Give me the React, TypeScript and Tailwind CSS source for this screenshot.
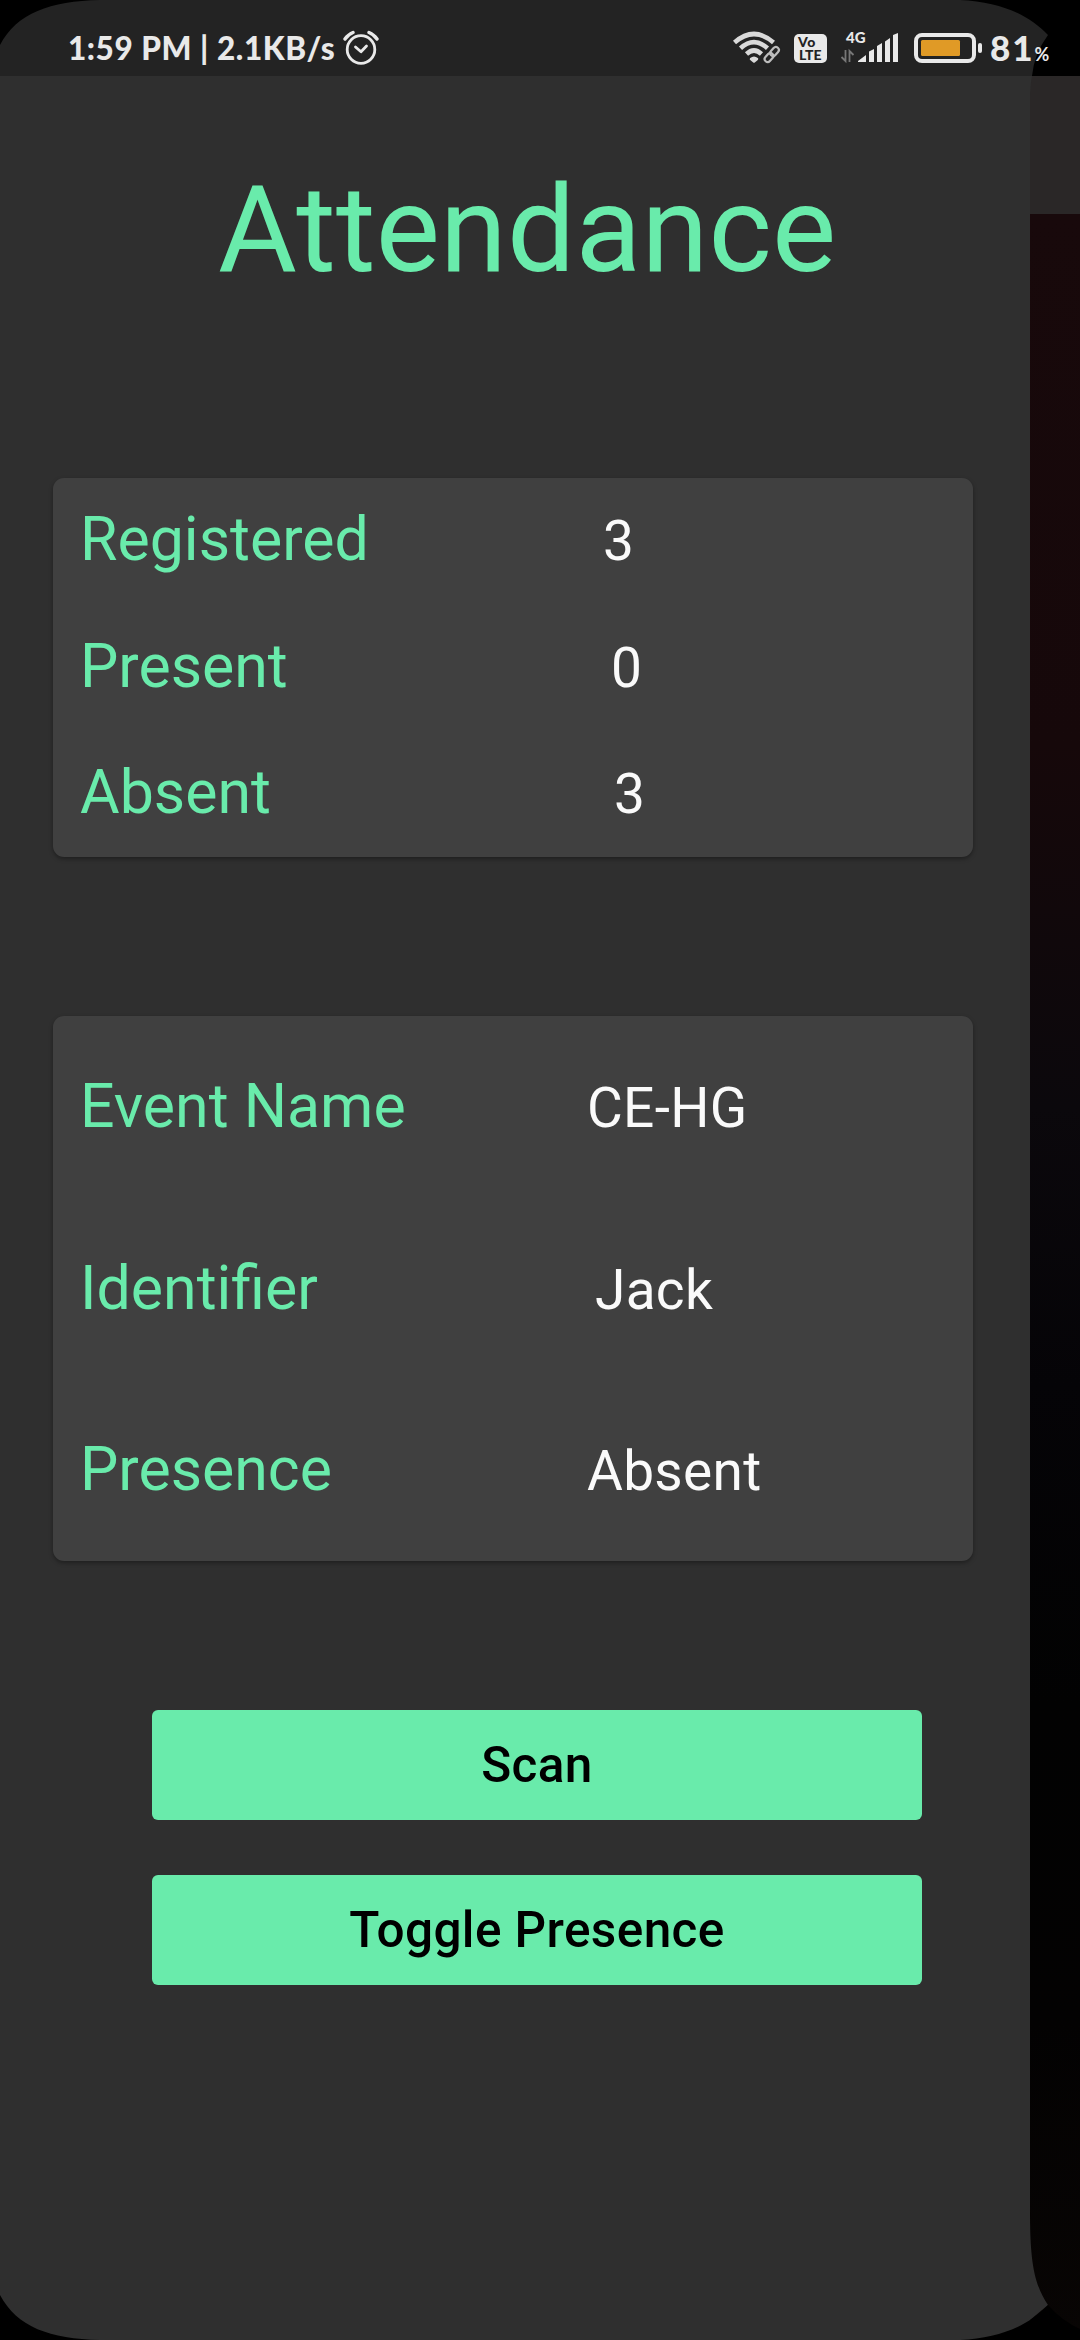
import React from "react";

const Clock = () => (
  <svg className="ml-[8px] h-[36px] w-[36px] shrink-0" viewBox="0 0 36 36" fill="none" stroke="#e9e9e9" strokeWidth="2.8" strokeLinecap="round" strokeLinejoin="round">
    <circle cx="18" cy="19.500" r="13.800" />
    <path d="M12.500 17 L18 21.800 L23.500 16" />
    <path d="M2 9 Q5 4.500 10 2.500 M34 9 Q31 4.500 26 2.500" strokeWidth="3.400" />
  </svg>
);

const Wifi = () => (
  <svg className="absolute left-[732px] top-[30px] h-[36px] w-[50px]" viewBox="0 0 50 36" fill="none" stroke="#d9d9d9" strokeWidth="4.600">
    <path d="M2.500 12.500 Q22 -4.500 41.500 12.500" />
    <path d="M8.500 18.300 Q22 6 35.500 18.300" />
    <path d="M14.500 24 Q22 17 29.500 24" />
    <path d="M19 29 Q22 26.500 25 29 L22 31.500 Z" strokeWidth="2.500" strokeLinejoin="round" fill="#d9d9d9" />
    <path d="M36 30 L44 20" stroke="#232323" strokeWidth="11" strokeLinecap="round" />
    <g stroke="#bdbdbd" strokeWidth="2.200">
      <rect x="39.500" y="16.500" width="6" height="10" rx="3" transform="rotate(42 42.500 21.500)" />
      <rect x="34" y="22.500" width="6" height="10" rx="3" transform="rotate(42 37 27.500)" />
    </g>
  </svg>
);

const Signal = () => (
  <svg className="absolute left-[840px] top-[30px] h-[34px] w-[60px]" viewBox="0 0 60 34" fill="#e9e9e9">
    <path d="M18 32 V31 L26 25 V32 Z M29 32 V21.500 L34 19 V32 Z M37 32 V16 L42 13 V32 Z M45 32 V11.500 L50 8 V32 Z M53 32 V5 L58 3 V32 Z" />
    <path d="M5.500 20 V31 L1.500 27 M9.500 32 V21 L13.500 25" fill="none" stroke="#777" strokeWidth="1.800" />
  </svg>
);

const Battery = () => (
  <svg className="absolute left-[914px] top-[33px] h-[30px] w-[70px]" viewBox="0 0 70 30">
    <rect x="2" y="2" width="58" height="26" rx="6" fill="none" stroke="#e9e9e9" strokeWidth="4" />
    <rect x="7" y="7" width="39" height="16" rx="1.500" fill="#e09a26" />
    <rect x="64" y="10" width="4" height="10" rx="2" fill="#e9e9e9" />
  </svg>
);

const StatusBar = () => (
  <header className="relative h-[76px] bg-[#232323]">
    <svg className="absolute left-[960px] top-0 h-[76px] w-[120px]" viewBox="960 0 120 76">
      <path d="M960 0 C1000 2 1028 14 1048 35 Q1034 54 1032 76 H1080 V0 Z" fill="#000" />
    </svg>
    <div className="absolute left-[68px] top-[29px] flex h-[38px] items-center whitespace-nowrap font-['Lato'] text-[31.500px] font-black leading-[38px] text-[#e9e9e9]">
      <span className="tracking-[0.550px]">1:59 PM | 2.1KB/s</span>
      <Clock />
    </div>
    <Wifi />
    <div className="absolute left-[794px] top-[34px] flex h-[29px] w-[33px] flex-col rounded-[5px] bg-[#e9e9e9] pt-[1px] font-['Lato'] text-[14px] font-black leading-[13px] text-[#232323]">
      <span className="pl-[4px] tracking-[0.500px]">Vo</span>
      <span className="pl-[5px]">LTE</span>
    </div>
    <span className="absolute left-[846px] top-[30px] font-['Lato'] text-[15px] font-black leading-[15px] text-[#e9e9e9]">4G</span>
    <Signal />
    <Battery />
    <div className="absolute left-[990px] top-[28px] flex h-[38px] items-baseline font-['Lato'] text-[#e9e9e9]">
      <span className="text-[35px] font-black leading-[38px] tracking-[2px]">81</span>
      <span className="text-[18px] font-bold">%</span>
    </div>
  </header>
);

const Row = ({ label, value, pad, height }: { label: string; value: string; pad: string; height: string }) => (
  <div className={"flex items-baseline " + height}>
    <span className="w-[507px] text-[60.8px] leading-[72px] text-[#69ebab]">{label}</span>
    <span className={"text-[55px] leading-[72px] tracking-[0.3px] text-[#fafafa] " + pad}>{value}</span>
  </div>
);

const CARD = "ml-[53px] w-[920px] rounded-[11px] bg-[#404040] pl-[27px] shadow-[0_2px_4px_rgba(0,0,0,0.35)] ";
const BUTTON = "block h-[110px] w-[770px] rounded-[6px] bg-[#69ebab] text-center text-[49.5px] font-medium leading-[110px] tracking-[0.4px] text-black ";

export default function App() {
  return (
    <div className="relative h-[2340px] w-[1080px] overflow-hidden bg-black font-['Roboto',sans-serif]">
      <StatusBar />
      <div className="flex h-[2264px]">
        <main className="w-[1030px] bg-[#2f2f2f]">
          <h1 className="ml-[218px] pt-[83px] text-[121px] leading-[142px] tracking-[0.2px] text-[#69ebab]">Attendance</h1>
          <section className={CARD + "mt-[177px] h-[379px] pt-[26px]"}>
            <Row label="Registered" value="3" pad="pl-[16px]" height="h-[127px]" />
            <Row label="Present" value="0" pad="pl-[24px]" height="h-[126px]" />
            <Row label="Absent" value="3" pad="pl-[27px]" height="h-[72px]" />
          </section>
          <section className={CARD + "mt-[159px] h-[545px] pt-[55px]"}>
            <Row label="Event Name" value="CE-HG" pad="pl-0" height="h-[182px]" />
            <Row label="Identifier" value="Jack" pad="pl-[8px]" height="h-[181px]" />
            <Row label="Presence" value="Absent" pad="pl-0" height="h-[72px]" />
          </section>
          <div className="ml-[152px] mt-[149px] flex flex-col gap-[55px]">
            <button className={BUTTON}>Scan</button>
            <button className={BUTTON}>Toggle Presence</button>
          </div>
        </main>
        <aside className="flex w-[50px] flex-col">
          <div className="h-[138px] bg-[#2a2727]" />
          <div className="flex-1 bg-[linear-gradient(to_bottom,#18090b_0%,#16080a_25%,#0b080c_42%,#050407_55%,#020202_70%,#030202_85%,#080504_100%)]" />
        </aside>
      </div>
      <svg className="absolute left-0 top-0 h-[48px] w-[100px]" viewBox="0 0 100 48">
        <path d="M0 0 H100 C50 1 17 13 0 45 Z" fill="#000" />
      </svg>
      <svg className="absolute left-[1030px] top-[76px] h-[24px] w-[4px]" viewBox="0 0 4 24">
        <path d="M0 0 H2 Q0 10 0 24 Z" fill="#2f2f2f" />
      </svg>
      <svg className="absolute bottom-0 left-0 h-[48px] w-[100px]" viewBox="0 0 100 48">
        <path d="M0 48 H100 C50 47 17 35 0 3 Z" fill="#000" />
      </svg>
      <svg className="absolute bottom-0 left-[960px] h-[130px] w-[120px]" viewBox="960 2210 120 130">
        <path d="M1030 2210 C1030 2262 1034 2284 1048 2305 L1030 2320 Z" fill="#2f2f2f" />
        <path d="M960 2340 C1000 2338 1028 2326 1048 2305 Q1062 2321 1080 2329 V2340 Z" fill="#000" />
      </svg>
    </div>
  );
}
